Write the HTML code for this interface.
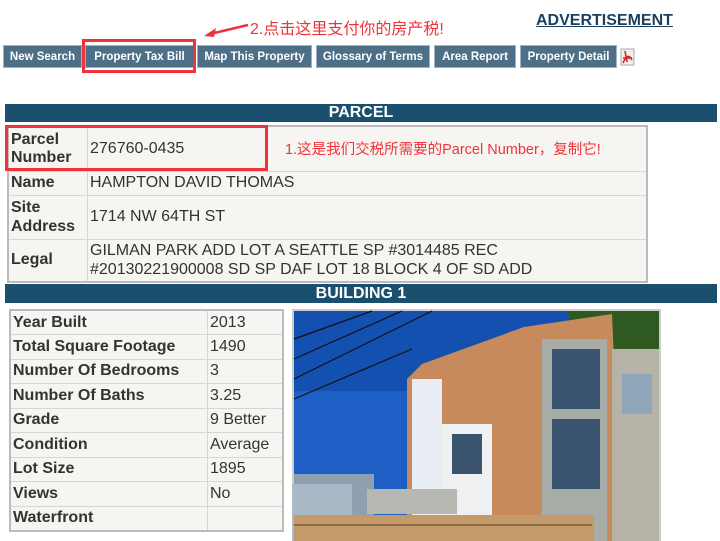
<!DOCTYPE html><html><head><meta charset="utf-8"><style>
body{margin:0;width:720px;height:541px;background:#fff;position:relative;overflow:hidden;font-family:"Liberation Sans","Noto Sans CJK SC",sans-serif;color:#333}
.a{position:absolute}
.btn{position:absolute;top:45px;height:23px;background:#4d6f87;color:#fff;font-weight:bold;font-size:11.5px;line-height:23px;text-align:center;border:1px solid #9fb2c0;box-sizing:border-box;white-space:nowrap}
.bar{position:absolute;left:5px;width:712px;background:#1b4f6e;color:#fff;font-weight:bold;text-align:center;font-size:16px}
table{border-collapse:collapse;position:absolute;background:#f6f5f2}
td{border:1px solid #d6d6d6;font-size:16px;padding:0 2px;vertical-align:middle}
.red{position:absolute;border:3px solid #f0333a;box-sizing:border-box}
.rt{position:absolute;color:#f0333a;font-size:14.5px;white-space:nowrap}
</style></head><body>
<div class="a" style="left:536px;top:12px;font-size:16px;font-weight:bold;color:#1b3f5e;text-decoration:underline">ADVERTISEMENT</div>
<div class="rt" style="left:250px;top:15px;font-size:16px">2.点击这里支付你的房产税!</div>
<svg class="a" style="left:200px;top:22px" width="50" height="16"><path d="M48 3 L10 12" stroke="#f0333a" stroke-width="2.5"/><path d="M4 14 L16 6 L14 15Z" fill="#f0333a"/></svg>
<div class="btn" style="left:3px;width:79px">New Search</div>
<div class="btn" style="left:85px;width:109px">Property Tax Bill</div>
<div class="btn" style="left:197px;width:115px">Map This Property</div>
<div class="btn" style="left:316px;width:114px">Glossary of Terms</div>
<div class="btn" style="left:434px;width:82px">Area Report</div>
<div class="btn" style="left:520px;width:97px">Property Detail</div>
<svg class="a" style="left:620px;top:48px" width="15" height="18"><rect x="1" y="1" width="13" height="16" fill="#eee" stroke="#aaa"/><path d="M3 15 C6 8 9 6 12 12 M5 3 L7 14 M3 10 H12" stroke="#d22" stroke-width="1.6" fill="none"/></svg>
<div class="red" style="left:82px;top:39px;width:114px;height:34px"></div>
<div class="bar" style="top:104px;height:18px;line-height:18px">PARCEL</div>
<table style="left:7px;top:125px;width:641px;border:2px solid #bbb">
<tr style="height:45px"><td style="width:74px;font-weight:bold;line-height:18px">Parcel<br>Number</td><td>276760-0435</td></tr>
<tr style="height:24px"><td style="font-weight:bold">Name</td><td>HAMPTON DAVID THOMAS</td></tr>
<tr style="height:44px"><td style="font-weight:bold;line-height:19px">Site<br>Address</td><td>1714 NW 64TH ST</td></tr>
<tr style="height:43px"><td style="font-weight:bold">Legal</td><td style="line-height:19px">GILMAN PARK ADD LOT A SEATTLE SP #3014485 REC<br>#20130221900008 SD SP DAF LOT 18 BLOCK 4 OF SD ADD</td></tr>
</table>
<div class="red" style="left:5px;top:125px;width:263px;height:46px"></div>
<div class="rt" style="left:285px;top:138px">1.这是我们交税所需要的Parcel Number，复制它!</div>
<div class="bar" style="top:284px;height:19px;line-height:19px">BUILDING 1</div>
<table style="left:9px;top:309px;width:275px;border:2px solid #bbb">
<tr style="height:24.5px"><td style="width:192px;font-weight:bold">Year Built</td><td>2013</td></tr>
<tr style="height:24.5px"><td style="font-weight:bold">Total Square Footage</td><td>1490</td></tr>
<tr style="height:24.5px"><td style="font-weight:bold">Number Of Bedrooms</td><td>3</td></tr>
<tr style="height:24.5px"><td style="font-weight:bold">Number Of Baths</td><td>3.25</td></tr>
<tr style="height:24.5px"><td style="font-weight:bold">Grade</td><td>9 Better</td></tr>
<tr style="height:24.5px"><td style="font-weight:bold">Condition</td><td>Average</td></tr>
<tr style="height:24.5px"><td style="font-weight:bold">Lot Size</td><td>1895</td></tr>
<tr style="height:24.5px"><td style="font-weight:bold">Views</td><td>No</td></tr>
<tr style="height:24.5px"><td style="font-weight:bold">Waterfront</td><td></td></tr>
</table>
<svg class="a" style="left:292px;top:309px" width="369" height="232">
<rect width="369" height="232" fill="#ccc"/>
<rect x="2" y="2" width="365" height="230" fill="#1d5fc4"/>
<rect x="2" y="2" width="365" height="80" fill="#1450b0"/>
<path d="M275 2 H367 V110 L340 120 L300 90Z" fill="#2e5a22"/>
<rect x="2" y="165" width="80" height="67" fill="#8ea0b0"/>
<rect x="0" y="175" width="60" height="57" fill="#a9b9c8"/>
<path d="M130 55 L232 18 L320 5 L330 232 H115 V70Z" fill="#c78a5c"/>
<rect x="120" y="70" width="30" height="162" fill="#e8eef3"/>
<rect x="150" y="115" width="50" height="117" fill="#eef0f2"/>
<rect x="250" y="30" width="65" height="202" fill="#a7aca7"/>
<rect x="260" y="40" width="48" height="60" fill="#3a5470"/>
<rect x="260" y="110" width="48" height="70" fill="#3a5470"/>
<rect x="160" y="125" width="30" height="40" fill="#3a5470"/>
<rect x="320" y="40" width="47" height="192" fill="#b8b3a8"/>
<rect x="330" y="65" width="30" height="40" fill="#8fa6b8"/>
<rect x="75" y="180" width="90" height="25" fill="#b7b8b2"/>
<rect x="2" y="206" width="300" height="26" fill="#c49a68"/>
<path d="M2 216 H300" stroke="#8a6a45" stroke-width="2"/>
<path d="M2 30 L80 2 M2 50 L110 2 M2 70 L140 2 M2 90 L120 40" stroke="#111" stroke-width="1.2"/>
</svg>
</body></html>
